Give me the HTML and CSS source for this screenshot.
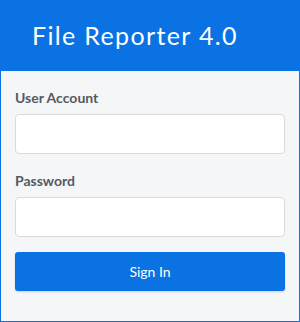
FILE: index.html
```html
<!DOCTYPE html>
<html lang="en">
<head>
  <meta charset="UTF-8">
  <title>File Reporter 4.0</title>
  <link rel="stylesheet" href="styles.css">
</head>
<body>
  <div class="login">
    <div class="login-header">File Reporter 4.0</div>
    <form class="login-body">
      <label class="field-label" for="account">User Account</label>
      <input class="field-input" type="text" id="account">
      <label class="field-label" for="password">Password</label>
      <input class="field-input" type="password" id="password">
      <button class="sign-in" type="button">Sign In</button>
    </form>
  </div>
</body>
</html>
```

FILE: styles.css
```css
body {
  margin: 0;
  font-family: Lato, "Open Sans", sans-serif;
}
.login {
  width: 300px;
  height: 322px;
  box-sizing: border-box;
  border: 1px solid #0a72e2;
  background-color: #f4f6f8;
}
.login-header {
  height: 71px;
  margin: -1px -1px 0;
  padding-left: 32px;
  background-color: #0a72e2;
  color: white;
  font-size: 25px;
  letter-spacing: 1.35px;
  line-height: 71px;
}
.login-body {
  display: flex;
  flex-direction: column;
  padding: 18px 14px 0;
  margin: 0;
}
.field-label {
  font-size: 14px;
  font-weight: bold;
  line-height: 17px;
  color: #555a60;
  margin-bottom: 8px;
}
.field-input {
  height: 40px;
  box-sizing: border-box;
  border: 1px solid #d8dadd;
  border-radius: 4px;
  background: white;
  margin-bottom: 18px;
}
#password {
  margin-bottom: 15px;
}
.sign-in {
  height: 39px;
  border: none;
  border-radius: 3px;
  background-color: #0a72e2;
  color: white;
  font-family: inherit;
  font-size: 14px;
  box-shadow: 0 1px 2px rgba(0,0,0,0.15);
}
```
